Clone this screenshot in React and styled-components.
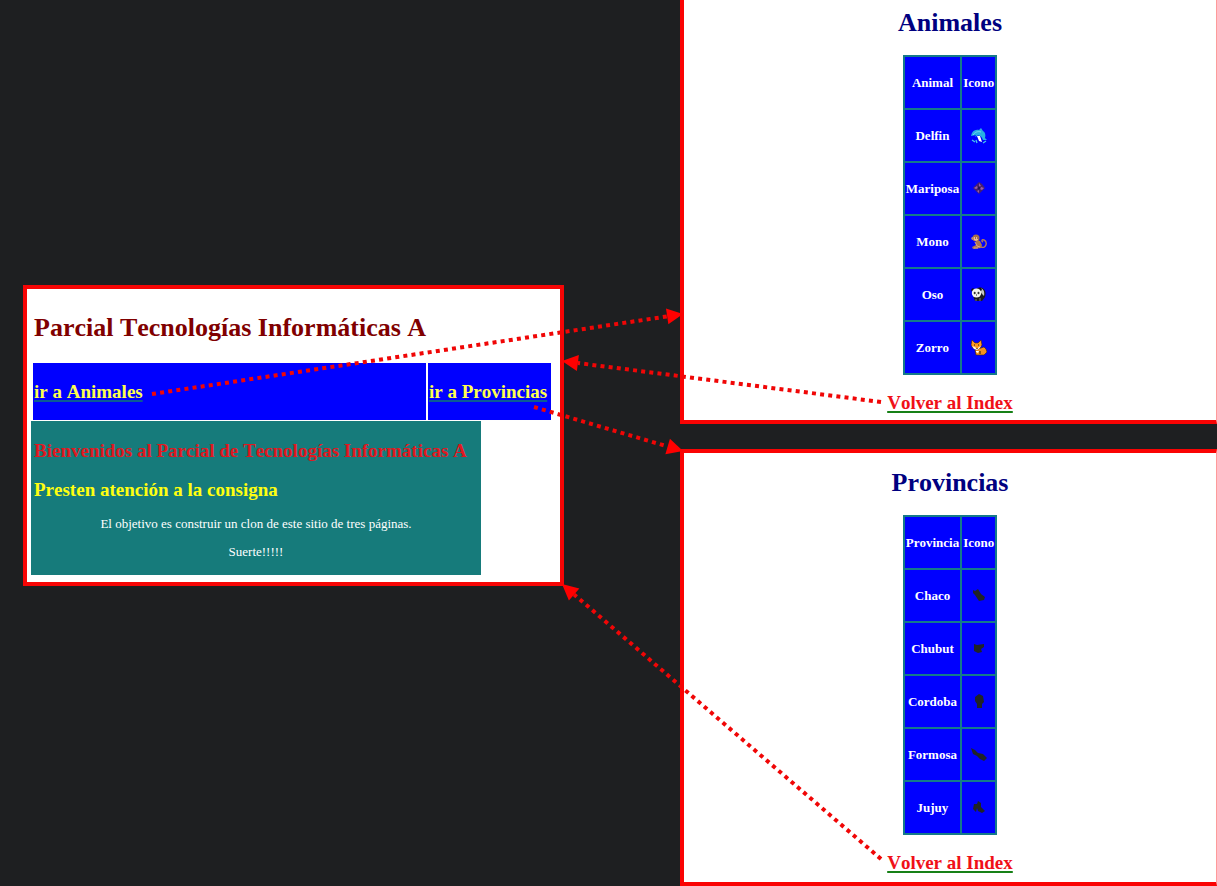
import React from "react";
import styled, { createGlobalStyle } from "styled-components";

const GlobalStyle = createGlobalStyle`
  * { box-sizing: border-box; }
  body {
    margin: 0;
    background: #1e1f21;
    font-family: "Liberation Serif", "Times New Roman", serif;
    font-size: 13px;
    font-kerning: none;
    line-height: 16px;
  }
`;

const Board = styled.main`
  position: relative;
  display: grid;
  grid-template-columns: minmax(0, 541fr) minmax(0, 537fr);
  column-gap: 116px;
  align-items: center;
  min-height: 100vh;
  padding-left: 23px;
`;

const IndexPage = styled.section`
  min-width: 0;
  margin-top: -15px;
  padding: 24px 9px 7px 4px;
  border: 4px solid #f60505;
  background: #fff;
`;

const Title = styled.h1`
  margin: 0 3px 20px;
  color: #800000;
  font-size: 26px;
  line-height: 30px;
`;

const Nav = styled.nav`
  display: flex;
  gap: 2px;
  margin-left: 2px;
`;

const NavCell = styled.div`
  display: flex;
  align-items: center;
  flex: ${(p) => (p.$wide ? "1 1 auto" : "0 0 123px")};
  height: 57px;
  padding: 0 1px;
  background: #0000ff;
`;

const PageLink = styled.a`
  color: ${(p) => p.$color};
  font-size: 19px;
  font-weight: bold;
  line-height: 22px;
  text-decoration: underline 2px ${(p) => p.$line};
  text-underline-offset: 2px;
  text-decoration-skip-ink: none;
  white-space: nowrap;
`;

const Welcome = styled.article`
  width: 450px;
  max-width: 100%;
  margin-top: 1px;
  padding: 19px 3px 15px;
  background: #167b7b;
`;

const Heading = styled.h2`
  margin: 0 0 ${(p) => p.$gap}px;
  color: ${(p) => p.$color};
  font-size: 19px;
  line-height: 22px;
`;

const Text = styled.p`
  margin: 0;
  color: #fff;
  text-align: center;

  & + & { margin-top: 12px; }
`;

const Column = styled.div`
  display: flex;
  flex-direction: column;
  gap: 25px;
  min-width: 0;
`;

const ListPage = styled.section`
  display: flex;
  flex-direction: column;
  align-items: center;
  padding: ${(p) => (p.$first ? "8px 0 6px" : "15px 0 8px")};
  border: 4px solid #fa0303;
  border-top-width: ${(p) => (p.$first ? "0" : "4px")};
  border-right: 1px solid #ff9a9a;
  background: #fff;
`;

const ListTitle = styled.h1`
  margin: 0 0 17px;
  color: #000080;
  font-size: 26px;
  line-height: 30px;
`;

const Table = styled.table`
  margin-bottom: 17px;
  border-collapse: collapse;
  background: #0000ff;
  color: #fff;
  text-align: center;
`;

const Row = styled.tr`
  height: 53px;
`;

const Cell = styled.th`
  padding: 0 1px;
  border: 2px solid #147a8a;
  font-size: 13px;
  line-height: 16px;
`;

const Icon = styled.svg`
  display: block;
  width: 16px;
  height: 16px;
  margin: 0 auto;
`;

const Overlay = styled.svg`
  position: absolute;
  inset: 0;
  width: 100%;
  height: 100%;
  pointer-events: none;
`;

const icons = {
  Delfin: (
    <>
      <path d="M0 8C1 3 4 1 8 2L10 0L12 3C14 4 15 7 14 10L16 12L12 12L11 10C10 8 8 7 6 8L4 9L5 7Z" fill="#27aee3" />
      <path d="M2 7C4 4 7 3 10 4" stroke="#78d5ee" fill="none" />
      <path d="M6 8L9 8L11 14L8 13Z" fill="#fff" />
      <path d="M1 12L4 14M5 12L6 15M12 15L15 13" stroke="#45c8ed" strokeWidth="1.3" />
    </>
  ),
  Mariposa: (
    <>
      <path d="M2 7L6 3L8 1L11 3L14 7L11 10L8 13L5 10Z" fill="#48206d" />
      <path d="M8 2L10 5L8 6ZM3 7L6 5L7 7L5 8ZM13 7L11 9L9 8L10 6ZM8 12L6 10L8 9Z" fill="#9a5fa8" />
      <circle cx="8" cy="7" r="1.4" fill="#241650" />
    </>
  ),
  Mono: (
    <>
      <path d="M10 13C15 15 17 8 13 6C11 5 10 7 12 8" fill="none" stroke="#b27a58" strokeWidth="1.4" />
      <path d="M5 6L9 7L11 11L10 14L2 15L1 13L5 11Z" fill="#ad7650" />
      <circle cx="5" cy="4" r="3.5" fill="#a66e4b" />
      <circle cx="1.7" cy="4.5" r="1.4" fill="#c18a6b" />
      <path d="M3 3H7V6L5 7L3 6Z" fill="#f0b997" />
      <path d="M4 8L6 12L9 13M3 14H7" stroke="#e0a583" fill="none" />
      <path d="M4 4H5M6 4H7" stroke="#42251d" />
    </>
  ),
  Oso: (
    <>
      <path d="M6 1C12 -1 16 3 14 10L11 14L4 14L2 9Z" fill="#1b1b20" />
      <path d="M8 1C12 1 14 4 13 9C11 7 9 5 8 1Z" fill="#c4c6c2" />
      <circle cx="2" cy="3" r="1.8" fill="#111" />
      <circle cx="9" cy="2.5" r="1.8" fill="#111" />
      <ellipse cx="5.5" cy="6" rx="4.7" ry="4.5" fill="#f4f4ed" />
      <ellipse cx="3.7" cy="6" rx="1" ry="1.2" fill="#333" />
      <ellipse cx="7.5" cy="6" rx="1" ry="1.2" fill="#333" />
      <path d="M5 8H6" stroke="#222" />
      <path d="M5 12V14M9 11V14" stroke="#777" />
    </>
  ),
  Zorro: (
    <>
      <path d="M7 9L10 8L13 7L15 9L16 12L13 15L5 15L4 10Z" fill="#f49220" stroke="#3c2114" strokeWidth=".6" />
      <path d="M1 0L4 3H7L10 0L11 5L9 8L6 10L2 8L0 5Z" fill="#ff981f" stroke="#472414" strokeWidth=".6" />
      <path d="M1 6L4 7L6 9L8 7L10 6L8 9L6 10L3 9Z" fill="#fff5df" />
      <path d="M5 11L8 11L7 13L5 12Z" fill="#fff" />
      <path d="M3 5H4M7 5H8M6 8V9M9 14V11" stroke="#291611" />
    </>
  ),
  Chaco: <path d="M2 2L4 3L7 1L10 6L14 9L13 12L8 13L4 7L2 5Z" fill="#202326" />,
  Chubut: <path d="M3 3L6 4L13 3L13 6L10 8L11 11L7 12L3 10Z" fill="#202326" />,
  Cordoba: <path d="M4 3L8 0L12 2L13 8L11 10L11 14L6 14L6 10L4 7Z" fill="#202326" />,
  Formosa: <path d="M0 1L4 3L7 6L12 7L16 11L13 14L9 12L6 9L2 7Z" fill="#202326" />,
  Jujuy: <path d="M3 4L6 4L7 1L10 3L10 7L14 11L11 13L7 11L6 8L5 12L2 9Z" fill="#202326" />,
};

function Listing({ title, column, rows, first }) {
  return (
    <ListPage $first={first} id={title.toLowerCase()}>
      <ListTitle>{title}</ListTitle>
      <Table>
        <thead>
          <Row>
            <Cell scope="col">{column}</Cell>
            <Cell scope="col">Icono</Cell>
          </Row>
        </thead>
        <tbody>
          {rows.map((name) => (
            <Row key={name}>
              <Cell scope="row">{name}</Cell>
              <Cell as="td">
                <Icon viewBox="0 0 16 16" role="img" aria-label={name}>{icons[name]}</Icon>
              </Cell>
            </Row>
          ))}
        </tbody>
      </Table>
      <PageLink href="#index" $color="#f01018" $line="#168016">Volver al Index</PageLink>
    </ListPage>
  );
}

function Arrow({ from, to }) {
  const [x1, y1] = from;
  const [x2, y2] = to;
  const length = Math.hypot(x2 - x1, y2 - y1);
  const ux = (x2 - x1) / length;
  const uy = (y2 - y1) / length;
  const bx = x2 - ux * 16;
  const by = y2 - uy * 16;
  const points = `${x2},${y2} ${bx - uy * 8},${by + ux * 8} ${bx + uy * 8},${by - ux * 8}`;
  return (
    <g>
      <line x1={x1} y1={y1} x2={bx} y2={by} stroke="#f00606" strokeWidth="4" strokeDasharray="4 4.2" />
      <polygon points={points} fill="#ff0000" />
    </g>
  );
}

export default function App() {
  return (
    <>
      <GlobalStyle />
      <Board>
        <IndexPage id="index">
          <Title>Parcial Tecnologías Informáticas A</Title>
          <Nav>
            <NavCell $wide>
              <PageLink href="#animales" $color="#ffff4d" $line="#0b5a94">ir a Animales</PageLink>
            </NavCell>
            <NavCell>
              <PageLink href="#provincias" $color="#ffff4d" $line="#0b5a94">ir a Provincias</PageLink>
            </NavCell>
          </Nav>
          <Welcome>
            <Heading $color="#e01820" $gap={17}>Bienvenidos al Parcial de Tecnologías Informáticas A</Heading>
            <Heading $color="#ffff10" $gap={15}>Presten atención a la consigna</Heading>
            <Text>El objetivo es construir un clon de este sitio de tres páginas.</Text>
            <Text>Suerte!!!!!</Text>
          </Welcome>
        </IndexPage>
        <Column>
          <Listing first title="Animales" column="Animal" rows={["Delfin", "Mariposa", "Mono", "Oso", "Zorro"]} />
          <Listing title="Provincias" column="Provincia" rows={["Chaco", "Chubut", "Cordoba", "Formosa", "Jujuy"]} />
        </Column>
        <Overlay viewBox="0 0 1217 886" preserveAspectRatio="none" aria-hidden="true">
          <Arrow from={[152, 394]} to={[683, 314]} />
          <Arrow from={[881, 402]} to={[562, 361]} />
          <Arrow from={[534, 407]} to={[683, 451]} />
          <Arrow from={[881, 859]} to={[562, 584]} />
        </Overlay>
      </Board>
    </>
  );
}
